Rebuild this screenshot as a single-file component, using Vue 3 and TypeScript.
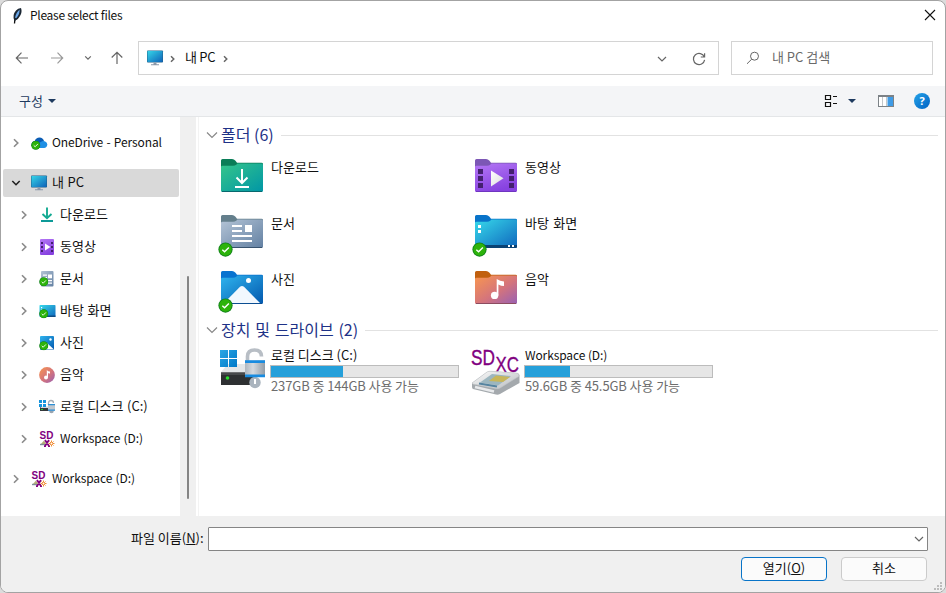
<script setup lang="ts">
interface TreeNode {
  label: string
  icon: string
  level: number
  open?: boolean
  latin?: boolean
  gapBefore?: boolean
}
interface Folder {
  label: string
  icon: string
  synced?: boolean
}
interface Drive {
  label: string
  icon: string
  used: number
  detail: string
  latin?: boolean
}

const tree: TreeNode[] = [
  { label: 'OneDrive - Personal', icon: 's-cloud', level: 0, latin: true },
  { label: '내 PC', icon: 's-pc', level: 0, open: true, gapBefore: true },
  { label: '다운로드', icon: 's-down', level: 1 },
  { label: '동영상', icon: 's-video', level: 1 },
  { label: '문서', icon: 's-doc', level: 1 },
  { label: '바탕 화면', icon: 's-desk', level: 1 },
  { label: '사진', icon: 's-pic', level: 1 },
  { label: '음악', icon: 's-music', level: 1 },
  { label: '로컬 디스크 (C:)', icon: 's-disk', level: 1 },
  { label: 'Workspace (D:)', icon: 's-sd', level: 1, latin: true },
  { label: 'Workspace (D:)', icon: 's-sd', level: 0, latin: true, gapBefore: true },
]

const folders: Folder[] = [
  { label: '다운로드', icon: 'f-down' },
  { label: '동영상', icon: 'f-video' },
  { label: '문서', icon: 'f-doc', synced: true },
  { label: '바탕 화면', icon: 'f-desk', synced: true },
  { label: '사진', icon: 'f-pic', synced: true },
  { label: '음악', icon: 'f-music' },
]

const drives: Drive[] = [
  { label: '로컬 디스크 (C:)', icon: 'd-local', used: 38.6, detail: '237GB 중 144GB 사용 가능' },
  { label: 'Workspace (D:)', icon: 'd-sdxc', used: 24.2, detail: '59.6GB 중 45.5GB 사용 가능', latin: true },
]
</script>

<template>
  <svg class="defs" width="0" height="0" aria-hidden="true">
    <defs>
      <linearGradient id="g-pc" x1="0" y1="0" x2="1" y2="1"><stop offset="0" stop-color="#35d5e8" /><stop offset="1" stop-color="#0f62b8" /></linearGradient>
      <linearGradient id="g-down" x1="0" y1="0" x2="1" y2="1"><stop offset="0" stop-color="#35c58a" /><stop offset="1" stop-color="#0096a6" /></linearGradient>
      <linearGradient id="g-video" x1="0" y1="0" x2="0.4" y2="1"><stop offset="0" stop-color="#b477f5" /><stop offset="1" stop-color="#8742e0" /></linearGradient>
      <linearGradient id="g-doc" x1="0" y1="0" x2="1" y2="1"><stop offset="0" stop-color="#b4c4d6" /><stop offset="1" stop-color="#6280a2" /></linearGradient>
      <linearGradient id="g-desk" x1="0" y1="0" x2="1" y2="1"><stop offset="0" stop-color="#37d9ea" /><stop offset="1" stop-color="#0f66bd" /></linearGradient>
      <linearGradient id="g-pic" x1="0" y1="0" x2="1" y2="1"><stop offset="0" stop-color="#2fb4ee" /><stop offset="1" stop-color="#0358ae" /></linearGradient>
      <linearGradient id="g-music" x1="0" y1="0" x2="1" y2="1"><stop offset="0" stop-color="#f8964f" /><stop offset="0.55" stop-color="#d4747c" /><stop offset="1" stop-color="#9860b4" /></linearGradient>
      <linearGradient id="g-white" x1="0" y1="0" x2="1" y2="1"><stop offset="0" stop-color="#ffffff" /><stop offset="1" stop-color="#dcdcdc" /></linearGradient>
      <linearGradient id="g-lock" x1="0" y1="0" x2="1" y2="0"><stop offset="0" stop-color="#aeb6bf" /><stop offset="0.4" stop-color="#d5dae0" /><stop offset="1" stop-color="#929ca6" /></linearGradient>
      <linearGradient id="g-win" x1="0" y1="0" x2="1" y2="1"><stop offset="0" stop-color="#2aa7e4" /><stop offset="1" stop-color="#0078c8" /></linearGradient>
      <linearGradient id="g-silver" x1="0" y1="0" x2="1" y2="1"><stop offset="0" stop-color="#fbfbfb" /><stop offset="1" stop-color="#b9bdc0" /></linearGradient>

      <symbol id="badge" viewBox="0 0 16 16">
        <circle cx="8" cy="8" r="7.6" fill="#11801c" />
        <circle cx="8" cy="8" r="6.6" fill="#2db30b" />
        <path d="M4.6 8.2 7 10.5 11.6 5.8" fill="none" stroke="#fff" stroke-width="1.5" />
      </symbol>

      <symbol id="f-down" viewBox="0 0 48 44">
        <path d="M3 9V1.5Q3 0 4.500 0H14Q16 0 17.500 1.800L19 3.700H43.500Q45 3.700 45 5V9Z" fill="#0a7d57" />
        <path d="M3 8Q3 6.800 4.500 6.800H15Q17 6.800 18.500 5.600L19.500 4.600H43.500Q45 4.600 45 6V31.500Q45 33 43.500 33H4.500Q3 33 3 31.500Z" fill="url(#g-down)" />
        <path d="M4 32.500H44" stroke="#08686e" stroke-width="1" />
        <path d="M24 10V23.500M18.500 18.500 24 24 29.500 18.500M17 28H31" fill="none" stroke="#fff" stroke-width="2" />
      </symbol>
      <symbol id="f-video" viewBox="0 0 48 44">
        <path d="M3 9V1.500Q3 0 4.500 0H14Q16 0 17.500 1.800L19 3.700H43.500Q45 3.700 45 5V9Z" fill="#7c57b5" />
        <path d="M3 8Q3 6.800 4.500 6.800H15Q17 6.800 18.500 5.600L19.500 4.600H43.500Q45 4.600 45 6V31.500Q45 33 43.500 33H4.500Q3 33 3 31.500Z" fill="url(#g-video)" />
        <path d="M4 32.500H44" stroke="#6f35c0" stroke-width="1" />
        <path d="M6 10h5v5h-5zM6 17h5v5h-5zM6 24h5v5h-5zM37 10h5v5h-5zM37 17h5v5h-5zM37 24h5v5h-5z" fill="#44206f" />
        <path d="M19 11.500 31.500 19.300 19 27.500Z" fill="url(#g-white)" />
      </symbol>
      <symbol id="f-doc" viewBox="0 0 48 44">
        <path d="M3 9V1.500Q3 0 4.500 0H14Q16 0 17.500 1.800L19 3.700H43.500Q45 3.700 45 5V9Z" fill="#647f8c" />
        <path d="M3 8Q3 6.800 4.500 6.800H15Q17 6.800 18.500 5.600L19.500 4.600H43.500Q45 4.600 45 6V31.500Q45 33 43.500 33H4.500Q3 33 3 31.500Z" fill="url(#g-doc)" />
        <path d="M4 32.500H44" stroke="#38536f" stroke-width="1" />
        <path d="M14 10h10v2h-10zM14 15h10v2h-10zM14 20h20v2h-20zM14 25h20v2h-20zM27 10h7v7h-7z" fill="#fff" />
      </symbol>
      <symbol id="f-desk" viewBox="0 0 48 44">
        <path d="M3 9V1.500Q3 0 4.500 0H14Q16 0 17.500 1.800L19 3.700H43.500Q45 3.700 45 5V9Z" fill="#0873c9" />
        <path d="M3 8Q3 6.800 4.500 6.800H15Q17 6.800 18.500 5.600L19.500 4.600H43.500Q45 4.600 45 6V31.500Q45 33 43.500 33H4.500Q3 33 3 31.500Z" fill="url(#g-desk)" />
        <path d="M3 30H45V32Q45 33 43.500 33H3Z" fill="#0a4274" />
        <path d="M6 10h3v3h-3zM6 15h3v3h-3zM36 30h2v2h-2zM40 30h2v2h-2z" fill="#fff" />
      </symbol>
      <symbol id="f-pic" viewBox="0 0 48 44">
        <path d="M3 9V1.500Q3 0 4.500 0H14Q16 0 17.500 1.800L19 3.700H43.500Q45 3.700 45 5V9Z" fill="#0873d0" />
        <path d="M3 8Q3 6.800 4.500 6.800H15Q17 6.800 18.500 5.600L19.500 4.600H43.500Q45 4.600 45 6V31.500Q45 33 43.500 33H4.500Q3 33 3 31.500Z" fill="url(#g-pic)" />
        <path d="M6 32 22 15.800Q24 14 26 15.800L42 32Z" fill="#f2f8fe" />
        <path d="M4 32.500H44" stroke="#0c4e92" stroke-width="1" />
        <circle cx="30.500" cy="9.500" r="2.500" fill="#fff" />
      </symbol>
      <symbol id="f-music" viewBox="0 0 48 44">
        <path d="M3 9V1.500Q3 0 4.500 0H14Q16 0 17.500 1.800L19 3.700H43.500Q45 3.700 45 5V9Z" fill="#c1600f" />
        <path d="M3 8Q3 6.800 4.500 6.800H15Q17 6.800 18.500 5.600L19.500 4.600H43.500Q45 4.600 45 6V31.500Q45 33 43.500 33H4.500Q3 33 3 31.500Z" fill="url(#g-music)" />
        <path d="M4 32.500H44" stroke="#8c4c60" stroke-width="1" />
        <circle cx="22.600" cy="24.400" r="3.700" fill="#fff" />
        <path d="M24.700 24.500V8Q28 10.300 32 10.500V15Q29 15 26.400 13.500V24.500Z" fill="#fff" />
      </symbol>

      <symbol id="d-local" viewBox="0 0 48 50">
        <path d="M10 17H30L38 25H3Z" fill="#e4e6e8" />
        <path d="M3 25.500H36V38H3Z" fill="#2e3032" />
        <path d="M3 25.500H36V28H3Z" fill="#47494b" />
        <circle cx="9.500" cy="31" r="1.800" fill="#28e02c" />
        <path d="M2 3h8v8h-8zM11 3h8v8h-8zM2 12h8v8h-8zM11 12h8v8h-8z" fill="url(#g-win)" />
        <path d="M29.500 14V9.500Q29.500 3 36.500 3Q43.500 3 43.500 9.500" fill="none" stroke="#b8bec5" stroke-width="3.600" />
        <circle cx="37" cy="35.500" r="5.700" fill="#aab4be" />
        <path d="M27 13.500h20v16.500h-20z" fill="url(#g-lock)" />
        <path d="M27 13.300h20v2.700h-20zM27 27.500h20v2.800h-20z" fill="#188be0" />
        <path d="M36 32h2v5h-2z" fill="#fff" />
      </symbol>
      <symbol id="d-sdxc" viewBox="0 0 50 50">
        <text x="0" y="17.600" font-family="Liberation Sans, sans-serif" font-size="22" fill="#800080" stroke="#800080" stroke-width=".35" textLength="24" lengthAdjust="spacingAndGlyphs">SD</text>
        <text x="24.500" y="24.600" font-family="Liberation Sans, sans-serif" font-size="22" fill="#800080" stroke="#800080" stroke-width=".35" textLength="23.500" lengthAdjust="spacingAndGlyphs">XC</text>
        <path d="M1 36 16 25Q18 24 20 24.300L45 26Q48 26 48.500 28V36L29 47Q27 48 25 47.500L2 42Q1 41.500 1 40Z" fill="#a4a9ad" />
        <path d="M1 36 16 25Q18 24 20 24.300L45 26Q49 26.500 47.500 29.500L29 41Q27 42 25 41.500L2 37Z" fill="url(#g-silver)" stroke="#c3c6c9" stroke-width=".6" />
        <path d="M9 35.500 21 27 40 29 27 38.500Z" fill="#9cb6bf" />
        <path d="M18 34 25 28.500 39 30 32 35Z" fill="#c8b65a" />
        <path d="M8 36.500 26 39.500" stroke="#5584a0" stroke-width="2" />
        <path d="M4 40 23 44.500" stroke="#e8eaec" stroke-width="2.500" />
      </symbol>

      <symbol id="s-cloud" viewBox="0 0 17 16">
        <path d="M3.500 12Q0.500 12 .6 9.200Q.8 6.500 3.600 6.300Q5 2.600 8.500 2.600Q12 2.700 13 6L9 11Z" fill="#0a5cb4" />
        <path d="M8 8 11.500 6Q15.800 5.800 16.300 9.500Q16 12.900 13 13H5Z" fill="#1f8fe4" />
        <use href="#badge" x="0" y="5.500" width="9.500" height="9.500" />
      </symbol>
      <symbol id="s-pc" viewBox="0 0 17 16">
        <rect x="0" y=".5" width="16" height="12" rx=".8" fill="#20618a" />
        <rect x=".5" y="1" width="15" height="11" fill="url(#g-pc)" />
        <path d="M6.500 12.500h3v2h-3zM4 14.200h8v1h-8z" fill="#8b99aa" />
      </symbol>
      <symbol id="s-down" viewBox="0 0 17 16">
        <path d="M8 .5V11M3.500 7 8 11.300 12.500 7" fill="none" stroke="#14aa92" stroke-width="1.900" />
        <path d="M2 14H14" stroke="#0d9a98" stroke-width="2" />
      </symbol>
      <symbol id="s-video" viewBox="0 0 17 16">
        <rect x="1" y="0" width="14" height="16" rx="1" fill="url(#g-video)" />
        <path d="M2 3h2v2h-2zM2 7h2v2h-2zM2 11h2v2h-2zM12 3h2v2h-2zM12 7h2v2h-2zM12 11h2v2h-2z" fill="#44206f" />
        <path d="M6 4.500 11.500 8 6 11.500Z" fill="#fff" />
      </symbol>
      <symbol id="s-doc" viewBox="0 0 17 16">
        <rect x="2" y="0" width="12.500" height="15.500" rx="1" fill="url(#g-doc)" />
        <path d="M4 3.500h4v1.200h-4zM4 6h4v1.200h-4zM9 3.500h4v3.700h-4zM5 9h8v1.200h-8zM8 11.500h5v1.200h-5z" fill="#fff" />
        <use href="#badge" x="0" y="6" width="9.500" height="9.500" />
      </symbol>
      <symbol id="s-desk" viewBox="0 0 17 16">
        <rect x=".5" y="2" width="16" height="12" rx=".8" fill="url(#g-desk)" />
        <path d="M2 4h1.200v1.200h-1.200zM2 6.500h1.200v1.200h-1.200z" fill="#fff" />
        <path d="M8 12.500h8.500v1.500h-8.500z" fill="#104c83" />
        <use href="#badge" x="0" y="6" width="9.500" height="9.500" />
      </symbol>
      <symbol id="s-pic" viewBox="0 0 17 16">
        <rect x="1" y="1" width="14" height="14" rx="1" fill="url(#g-pic)" />
        <path d="M3 14.500 8 8 15 14.500Z" fill="#fff" />
        <circle cx="11.500" cy="4.500" r="1.200" fill="#fff" />
        <use href="#badge" x="0" y="6" width="9.500" height="9.500" />
      </symbol>
      <symbol id="s-music" viewBox="0 0 17 16">
        <circle cx="8" cy="8" r="7.900" fill="url(#g-music)" />
        <circle cx="7" cy="10.600" r="2" fill="#fff" />
        <path d="M7.800 10.500V3Q9 4.500 11 4.500V6.600Q10 6.600 9 6V10.500Z" fill="#fff" />
      </symbol>
      <symbol id="s-disk" viewBox="0 0 17 16">
        <path d="M1 8h13v4h-13z" fill="#34383b" />
        <path d="M3 7.500h11v1.500h-13z" fill="#d5dade" />
        <path d="M0 1h3v3h-3zM4 1h3v3h-3zM0 5h3v3h-3zM4 5h3v3h-3z" fill="#1594dc" />
        <path d="M9.500 6V4Q9.500 1.500 12 1.500Q14.500 1.500 14.500 4" fill="none" stroke="#a5adb5" stroke-width="1.300" />
        <circle cx="12.500" cy="12" r="2.300" fill="#9aa5b0" />
        <path d="M9 5.500h7v6h-7z" fill="#c0c7ce" />
        <path d="M9 5h7v1.200h-7zM9 10.500h7v1.200h-7z" fill="#2b8fd6" />
        <path d="M2 10h2v1h-2z" fill="#2bd134" />
      </symbol>
      <symbol id="s-sd" viewBox="0 0 17 16">
        <path d="M1.500 13.500 5 9.500 8 14Z" fill="#b8b078" />
        <path d="M1 13.500H6" stroke="#7f8f99" stroke-width="1.400" />
        <path d="M6 9 10 15M10 9 6 15M5 15.500h2M9 15.500h2" stroke="#800080" stroke-width="1.800" />
        <path d="M12.500 9.500v6M9.500 12.500h6M10.500 10.500l4 4M14.500 10.500l-4 4" stroke="#f08a30" stroke-width="1" />
        <circle cx="12.500" cy="12.500" r="1" fill="#fff" />
        <text x="0.600" y="8.300" font-family="Liberation Sans, sans-serif" font-weight="bold" font-size="11" fill="#800080" textLength="13.800" lengthAdjust="spacingAndGlyphs">SD</text>
      </symbol>
    </defs>
  </svg>

  <div class="dialog">
    <header class="titlebar">
      <svg class="feather" viewBox="0 0 12 18">
        <path d="M3.500 16.500Q3.300 12 5 9" fill="none" stroke="#111" stroke-width="1.300" />
        <path d="M3.300 13.500Q1 8 5 3.500 7 1 10 1Q11.500 5 9 9 7 13 3.800 14Z" fill="#1b2733" />
        <path d="M4.200 11Q4.500 6 8.600 2.400Q8.800 7 5.400 11Z" fill="#6aa6e8" />
      </svg>
      <span class="title">Please select files</span>
      <svg class="close" viewBox="0 0 12 12"><path d="M1 1 11 11M11 1 1 11" stroke="#111" stroke-width="1.100" /></svg>
    </header>

    <nav class="navbar">
      <div class="arrows">
        <svg class="back" viewBox="0 0 14 14"><path d="M13 7H1.500M6.500 1.700 1.300 7 6.500 12.300" /></svg>
        <svg class="forward" viewBox="0 0 14 14"><path d="M1 7H12.500M7.500 1.700 12.700 7 7.500 12.300" /></svg>
        <svg class="recent" viewBox="0 0 8 6"><path d="M1.200 1.300 4 4.100 6.800 1.300" /></svg>
        <svg class="up" viewBox="0 0 14 14"><path d="M7 13V1.500M1.700 6.500 7 1.300 12.300 6.500" /></svg>
      </div>
      <div class="address">
        <svg class="ico"><use href="#s-pc" /></svg>
        <svg class="crumb" viewBox="0 0 5 8"><path d="M1 1.200 3.800 4 1 6.800" /></svg>
        <span class="path">내 PC</span>
        <svg class="crumb" viewBox="0 0 5 8"><path d="M1 1.200 3.800 4 1 6.800" /></svg>
        <svg class="drop" viewBox="0 0 10 6"><path d="M1 1 5 5 9 1" /></svg>
        <svg class="refresh" viewBox="0 0 14 14"><path d="M12.300 5A5.600 5.600 0 1 0 12.600 7.800M12.600 1.300V5H8.800" /></svg>
      </div>
      <div class="search">
        <svg class="lens" viewBox="0 0 14 14"><circle cx="8.500" cy="5.200" r="4" /><path d="M5.700 8.200 1 12.800" /></svg>
        <span>내 PC 검색</span>
      </div>
    </nav>

    <div class="toolbar">
      <span class="organize">구성</span>
      <i class="caret"></i>
      <svg class="view" viewBox="0 0 14 14">
        <path d="M1.500 1.500h5v4h-5zM1.500 8.500h5v4h-5z" fill="none" stroke="#111" stroke-width="1.200" />
        <path d="M9 2.500h4M9 9.500h4" stroke="#111" stroke-width="1.200" />
      </svg>
      <i class="caret view-caret"></i>
      <svg class="pane" viewBox="0 0 16 12">
        <rect x=".5" y=".5" width="15" height="11" fill="#fff" stroke="#7c8287" />
        <path d="M1 1.500H15" stroke="#7c8287" stroke-width="1" />
        <path d="M4.500 2V11M8.500 2V11" stroke="#c3c7ca" stroke-width="1" />
        <path d="M9.500 2h5.500v9h-5.500z" fill="#3f9be6" />
      </svg>
      <span class="help">?</span>
    </div>

    <div class="body">
      <aside class="tree">
        <div
          v-for="(node, i) in tree"
          :key="i"
          class="node"
          :class="{ child: node.level === 1, selected: node.open, gap: node.gapBefore }"
        >
          <svg v-if="node.open" class="chev open" viewBox="0 0 10 10"><path d="M1.300 3 5 6.700 8.700 3" /></svg>
          <svg v-else class="chev" viewBox="0 0 10 10"><path d="M3 1.200 6.800 5 3 8.800" /></svg>
          <svg class="ico"><use :href="'#' + node.icon" /></svg>
          <span :class="{ latin: node.latin }">{{ node.label }}</span>
        </div>
      </aside>
      <div class="scrollbar"><div class="thumb"></div></div>

      <main class="files">
        <div class="group">
          <svg class="gchev" viewBox="0 0 12 8"><path d="M1 1.500 6 6.500 11 1.500" /></svg>
          <h2>폴더 (6)</h2>
          <div class="rule"></div>
        </div>
        <div class="folders">
          <div v-for="folder in folders" :key="folder.label" class="folder">
            <svg class="big">
              <use :href="'#' + folder.icon" width="48" height="44" />
              <use v-if="folder.synced" href="#badge" x="0" y="27" width="15" height="15" />
            </svg>
            <span>{{ folder.label }}</span>
          </div>
        </div>
        <div class="group drives-head">
          <svg class="gchev" viewBox="0 0 12 8"><path d="M1 1.500 6 6.500 11 1.500" /></svg>
          <h2>장치 및 드라이브 (2)</h2>
          <div class="rule"></div>
        </div>
        <div class="drives">
          <div v-for="drive in drives" :key="drive.label" class="drive">
            <svg class="drive-ico"><use :href="'#' + drive.icon" /></svg>
            <div class="info">
              <span class="name" :class="{ latin: drive.latin }">{{ drive.label }}</span>
              <div class="meter"><div class="fill" :style="{ width: drive.used + '%' }"></div></div>
              <span class="detail">{{ drive.detail }}</span>
            </div>
          </div>
        </div>
      </main>
    </div>

    <footer class="footer">
      <div class="name-row">
        <label>파일 이름(<u>N</u>):</label>
        <div class="combo"><svg viewBox="0 0 10 6"><path d="M1 1 5 5 9 1" /></svg></div>
      </div>
      <div class="buttons">
        <button class="primary">열기(<u>O</u>)</button>
        <button>취소</button>
      </div>
      <svg class="grip" viewBox="0 0 9 9"><path d="M6 0h2v2h-2zM3 3h2v2h-2zM6 3h2v2h-2zM0 6h2v2h-2zM3 6h2v2h-2zM6 6h2v2h-2z" /></svg>
    </footer>
  </div>
</template>

<style>
body {
  background: #dcdcdc;
  overflow: hidden;
}
</style>

<style scoped>
.defs {
  position: absolute;
}
.dialog {
  box-sizing: border-box;
  width: 946px;
  height: 593px;
  display: flex;
  flex-direction: column;
  border: 1px solid #a3a3a3;
  border-radius: 8px;
  overflow: hidden;
  background: #fff;
  color: #111;
  font: 13px/18px "Noto Sans CJK KR", sans-serif;
  white-space: nowrap;
}
svg {
  display: block;
  flex: none;
}
.latin {
  font-size: 12px;
  letter-spacing: -0.1px;
}
.ico {
  width: 17px;
  height: 16px;
}
.titlebar {
  height: 29px;
  display: flex;
  align-items: center;
  padding: 0 9px 0 10px;
}
.feather {
  width: 12px;
  height: 18px;
}
.title {
  margin: 0 0 2px 7px;
  font-size: 12px;
  letter-spacing: -0.28px;
}
.close {
  width: 12px;
  height: 12px;
  margin: 0 0 1px auto;
}
.navbar {
  height: 56px;
  box-sizing: border-box;
  padding: 11px 12px 11px 0;
  display: flex;
}
.arrows {
  width: 137px;
  box-sizing: border-box;
  padding-left: 14px;
  display: flex;
  align-items: center;
}
.arrows svg,
.address path,
.lens,
.combo svg,
.gchev,
.chev {
  fill: none;
  stroke: #666;
  stroke-width: 1.2;
}
.back,
.forward,
.up {
  width: 14px;
  height: 14px;
}
.arrows .forward {
  margin-left: 21px;
  stroke: #999;
}
.recent {
  width: 8px;
  height: 6px;
  margin-left: 20px;
}
.up {
  margin-left: 17.5px;
}
.address,
.search {
  box-sizing: border-box;
  height: 34px;
  border: 1px solid #d4d4d4;
  display: flex;
  align-items: center;
}
.address {
  width: 581px;
  padding: 0 12px 0 8px;
}
.crumb {
  width: 5px;
  height: 8px;
  margin: 2px 0 0 6px;
}
.address .crumb path {
  stroke-width: 1.5;
}
.path {
  margin: 0 2px 2px 10px;
  letter-spacing: -0.3px;
}
.drop {
  width: 10px;
  height: 6px;
  margin: 2px 0 0 auto;
}
.refresh {
  width: 14px;
  height: 14px;
  margin: 2px 0 0 25px;
}
.search {
  width: 202px;
  margin-left: 12px;
  padding-left: 14px;
  color: #6a6a6a;
}
.search span {
  margin-bottom: 2px;
}
.lens {
  width: 14px;
  height: 14px;
  margin-right: 12px;
  stroke-width: 1;
}
.toolbar {
  height: 31px;
  box-sizing: border-box;
  display: flex;
  align-items: center;
  padding: 0 15px 0 18px;
  background: #f4f5f7;
  border-bottom: 1px solid #e4e6e8;
  color: #1e3a5f;
}
.organize {
  margin-bottom: 1px;
}
.caret {
  margin-left: 5px;
  border: 4px solid transparent;
  border-top-color: #1e3a5f;
  border-bottom: 0;
}
.view {
  width: 14px;
  height: 14px;
  margin-left: auto;
}
.view-caret {
  margin-left: 10px;
}
.pane {
  width: 16px;
  height: 12px;
  margin-left: 22px;
}
.help {
  width: 16px;
  height: 16px;
  margin-left: 20px;
  border-radius: 50%;
  background: linear-gradient(135deg, #25a3e8, #0062c4);
  color: #fff;
  font: bold 11px/16px "Open Sans", sans-serif;
  text-align: center;
}
.body {
  height: 399px;
  display: flex;
}
.tree {
  width: 179px;
  box-sizing: border-box;
  padding: 12px 1px 0 2px;
}
.node {
  height: 28px;
  margin-bottom: 4px;
  padding-left: 8px;
  display: flex;
  align-items: center;
  border-radius: 2px;
  word-spacing: 0.7px;
}
.node.gap {
  margin-top: 12px;
}
.node.child {
  padding-left: 16px;
}
.node.selected {
  background: #d9d9d9;
}
.chev {
  width: 10px;
  height: 10px;
  margin-right: 10px;
  stroke: #8a8a8a;
  stroke-width: 1.6;
}
.chev.open {
  stroke: #222;
}
.node span {
  margin: 0 0 2px 4px;
}
.scrollbar {
  width: 16px;
  background: #f0f0f0;
}
.thumb {
  width: 2px;
  height: 223px;
  margin: 159px 0 0 7px;
  border-radius: 1px;
  background: #858585;
}
.files {
  flex: 1;
  margin-left: 2px;
  border-left: 1px solid #f3f3f3;
}
.group {
  height: 22px;
  margin-top: 7px;
  padding: 0 7px 0 7px;
  display: flex;
  align-items: center;
}
.gchev {
  width: 12px;
  height: 8px;
  stroke: #888;
}
h2 {
  margin: 0 7px 2px 3px;
  font-size: 16px;
  line-height: 22px;
  font-weight: 400;
  color: #1e3287;
}
.drives-head h2 {
  word-spacing: 1.2px;
}
.rule {
  flex: 1;
  height: 1px;
  background: #e2e2e2;
}
.folders,
.drives {
  display: grid;
  grid-template-columns: 254px 254px;
}
.folders {
  grid-auto-rows: 56px;
  padding: 13px 0 0 19px;
}
.folder {
  display: flex;
}
.big {
  width: 48px;
  height: 44px;
}
.folder span {
  margin: -1px 0 0 5px;
  word-spacing: 1.5px;
}
.drives-head {
  margin-top: -8px;
}
.drives {
  padding: 5px 0 0 18px;
}
.drive {
  display: flex;
}
.drive-ico {
  width: 50px;
  height: 50px;
  margin-top: 1px;
}
.info {
  margin-left: 3px;
  display: flex;
  flex-direction: column;
}
.name {
  height: 19px;
  padding-left: 1px;
}
.meter {
  width: 189px;
  height: 13px;
  box-sizing: border-box;
  border: 1px solid #bcbcbc;
  background: #e6e6e6;
}
.fill {
  height: 100%;
  background: #26a0da;
}
.detail {
  margin-top: -1px;
  padding-left: 1px;
  color: #6d6d6d;
  letter-spacing: -0.1px;
}
.footer {
  flex: 1;
  position: relative;
  background: #f0f0f0;
  padding-top: 11px;
}
.name-row {
  display: flex;
  align-items: center;
  padding: 0 17px 0 130px;
}
.name-row label {
  width: 77px;
  margin-bottom: 2px;
}
.combo {
  flex: 1;
  height: 24px;
  box-sizing: border-box;
  border: 1px solid #858585;
  border-radius: 1px;
  background: #fff;
  display: flex;
  align-items: center;
  justify-content: flex-end;
  padding-right: 3px;
}
.combo svg {
  width: 10px;
  height: 6px;
}
.buttons {
  display: flex;
  justify-content: flex-end;
  gap: 14px;
  padding: 6px 18px 0 0;
}
button {
  width: 86px;
  height: 24px;
  padding: 0 0 2px;
  border: 1px solid #cbcbcb;
  border-radius: 4px;
  background: #fbfbfb;
  color: #111;
  font: inherit;
}
button.primary {
  border-color: #0874c8;
}
u {
  text-underline-offset: 1px;
}
.grip {
  position: absolute;
  right: 2px;
  bottom: 1px;
  width: 9px;
  height: 9px;
  fill: #bcbcbc;
}
</style>
